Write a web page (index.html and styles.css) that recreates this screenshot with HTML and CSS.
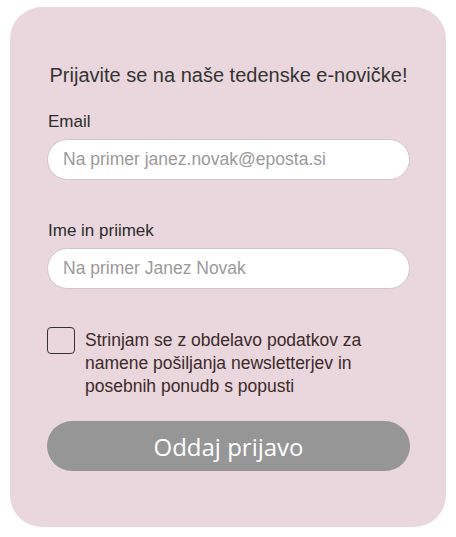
FILE: index.html
```html
<!DOCTYPE html>
<html lang="sl">
<head>
<meta charset="utf-8">
<link rel="stylesheet" href="styles.css">
</head>
<body>
<form class="card">
  <h2 class="title">Prijavite se na naše tedenske e-novičke!</h2>
  <div class="field">
    <label class="label" for="email">Email</label>
    <input class="input" id="email" type="text" placeholder="Na primer janez.novak@eposta.si">
  </div>
  <div class="field">
    <label class="label" for="name">Ime in priimek</label>
    <input class="input" id="name" type="text" placeholder="Na primer Janez Novak">
  </div>
  <label class="consent">
    <span class="box"></span>
    <span class="consent-text">Strinjam se z obdelavo podatkov za namene pošiljanja newsletterjev in posebnih ponudb s popusti</span>
  </label>
  <button class="submit" type="button">Oddaj prijavo</button>
</form>
</body>
</html>
```

FILE: styles.css
```css
* { box-sizing: border-box; }
html, body { margin: 0; padding: 0; background: #fff; }
body { font-family: "Liberation Sans", Arial, sans-serif; color: #333; }
.card {
  margin: 7px 10px 0 10px;
  width: 436px;
  height: 520px;
  background: #ead7dd;
  border-radius: 32px;
  padding: 56px 36px 0 37px;
  display: flex;
  flex-direction: column;
}
.title {
  margin: 0 0 25px 0;
  font-size: 20px;
  font-weight: normal;
  text-align: center;
  line-height: 24px;
  color: #333;
}
.field { display: flex; flex-direction: column; margin-bottom: 41px; }
.field + .field { margin-bottom: 38px; }
.label { font-size: 17px; line-height: 20px; margin: 0 0 7px 1px; color: #2b2b2b; }
.input {
  height: 41px;
  border: 1px solid #cfc6c9;
  border-radius: 21px;
  background: #fff;
  padding: 0 15px;
  font-family: "Liberation Sans", Arial, sans-serif;
  font-size: 17.5px;
  color: #333;
  outline: none;
}
.input::placeholder { color: #9a9a9a; }
.consent { display: flex; gap: 10px; align-items: flex-start; }
.box {
  flex: 0 0 auto;
  width: 28px; height: 27px;
  border: 1px solid #333;
  border-radius: 4px;
}
.consent-text { font-size: 17.5px; line-height: 23px; color: #3a2a2a; margin-top: 2px; }
.submit {
  margin-top: 23px;
  height: 50px;
  border: none;
  border-radius: 25px;
  background: #969696;
  color: #fff;
  font-family: "Open Sans", sans-serif;
  font-size: 24px;
}
```
